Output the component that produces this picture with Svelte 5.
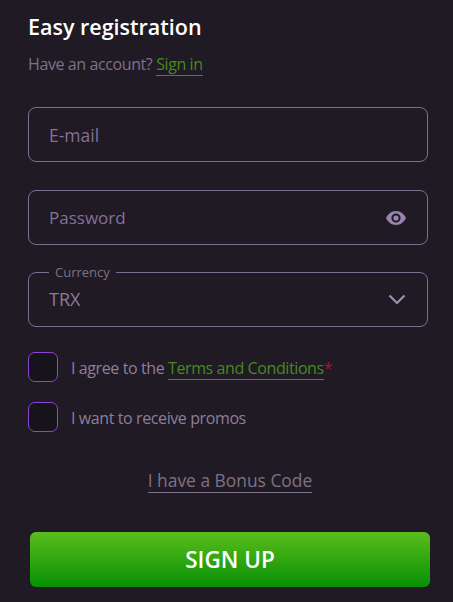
<script lang="ts">
	let agreed = $state(false);
	let promos = $state(false);
</script>

<div class="page">
	<h1>Easy registration</h1>
	<p class="have">Have an account? <a href="#signin">Sign in</a></p>

	<div class="field email"><span class="placeholder">E-mail</span></div>

	<div class="field password">
		<span class="placeholder pw">Password</span>
		<svg class="eye" width="20" height="14" viewBox="0 0 20 14" aria-hidden="true">
			<path fill="#9a84ad" fill-rule="evenodd" d="M10 0C5.6 0 1.9 2.8 0 7c1.900 4.200 5.600 7 10 7s8.100-2.800 10-7c-1.900-4.200-5.600-7-10-7zm0 11.600a4.600 4.600 0 1 1 0-9.200 4.600 4.600 0 0 1 0 9.200zm0-2a2.600 2.600 0 1 0 0-5.200 2.600 2.600 0 0 0 0 5.200z"/>
		</svg>
	</div>

	<fieldset class="currency">
		<legend>Currency</legend>
		<span class="value">TRX</span>
		<svg class="chevron" width="18" height="11" viewBox="0 0 18 11" aria-hidden="true">
			<path d="M1.500 1.500 9 9l7.500-7.500" fill="none" stroke="#a08fb0" stroke-width="2.200"/>
		</svg>
	</fieldset>

	<label class="check first">
		<input type="checkbox" bind:checked={agreed} />
		<span>I agree to the <a href="#terms">Terms and Conditions</a><em>*</em></span>
	</label>
	<label class="check second">
		<input type="checkbox" bind:checked={promos} />
		<span>I want to receive promos</span>
	</label>

	<div class="bonus"><a href="#bonus">I have a Bonus Code</a></div>

	<button type="button" class="signup">SIGN UP</button>
</div>

<style>
	:global(body) {
		margin: 0;
		background: #1f1a24;
	}

	.page {
		box-sizing: border-box;
		width: 453px;
		height: 602px;
		overflow: hidden;
		padding: 11px 25px 0 28px;
		background: #1f1a24;
		font-family: "Open Sans", "Noto Sans", sans-serif;
		color: #8f8299;
	}

	h1 {
		margin: 0;
		font-size: 21.500px;
		line-height: 32px;
		font-weight: 600;
		color: #ffffff;
	}

	.have {
		margin: 10px 0 0;
		font-size: 16px;
		letter-spacing: -0.400px;
		line-height: 22px;
		color: #7d7287;
	}

	.have a {
		color: #468a1e;
		text-decoration: none;
		border-bottom: 1px solid #468a1e;
	}

	.field {
		box-sizing: border-box;
		display: flex;
		align-items: center;
		justify-content: space-between;
		width: 400px;
		padding: 0 21px 0 20px;
		border: 1px solid #7f6d90;
		border-radius: 8px;
	}

	.email {
		height: 55px;
		margin-top: 32px;
	}

	.password {
		height: 55px;
		margin-top: 28px;
	}

	.placeholder,
	.value {
		font-size: 17.500px;
		color: #85709a;
	}

	.pw {
		font-size: 17px;
	}

	.value {
		font-size: 18px;
		color: #8b7b9b;
		line-height: 28px;
	}

	.currency {
		box-sizing: border-box;
		display: block;
		position: relative;
		width: 400px;
		height: 63px;
		margin: 19px 0 0;
		padding: 5px 20px 0;
		border: 1px solid #7f6d90;
		border-radius: 8px;
		min-width: 0;
	}

	.currency legend {
		margin-left: 0;
		padding: 0 6px;
		font-size: 13px;
		line-height: 16px;
		color: #7d7287;
	}

	.chevron {
		position: absolute;
		right: 21px;
		top: 14px;
	}

	.check {
		display: flex;
		align-items: center;
		gap: 13px;
		font-size: 16px;
		letter-spacing: -0.400px;
		line-height: 22px;
		color: #8d7f9b;
	}

	.check span {
		padding-top: 2px;
	}

	.check.first {
		margin-top: 25px;
	}

	.check.second {
		margin-top: 20px;
	}

	.check input {
		appearance: none;
		box-sizing: border-box;
		width: 30px;
		height: 30px;
		margin: 0;
		flex: none;
		border: 1.500px solid #8f45dc;
		border-radius: 7px;
		background: #17131b;
	}

	.check a {
		color: #468a1e;
		text-decoration: none;
		border-bottom: 1px solid #468a1e;
	}

	.check em {
		font-style: normal;
		color: #a8123a;
	}

	.bonus {
		display: flex;
		justify-content: center;
		margin: 36px 0 0 4px;
		font-size: 17.400px;
		line-height: 24px;
	}

	.bonus a {
		color: #7d7287;
		text-decoration: none;
		border-bottom: 1px solid #7d7287;
	}

	.signup {
		display: block;
		width: 400px;
		height: 55px;
		margin: 39px 0 0 2px;
		padding: 0;
		border: 0;
		border-radius: 6px;
		background: linear-gradient(180deg, #5bbd1c 0%, #079005 100%);
		font-family: inherit;
		font-size: 22.500px;
		font-weight: 600;
		color: #ffffff;
	}
</style>
